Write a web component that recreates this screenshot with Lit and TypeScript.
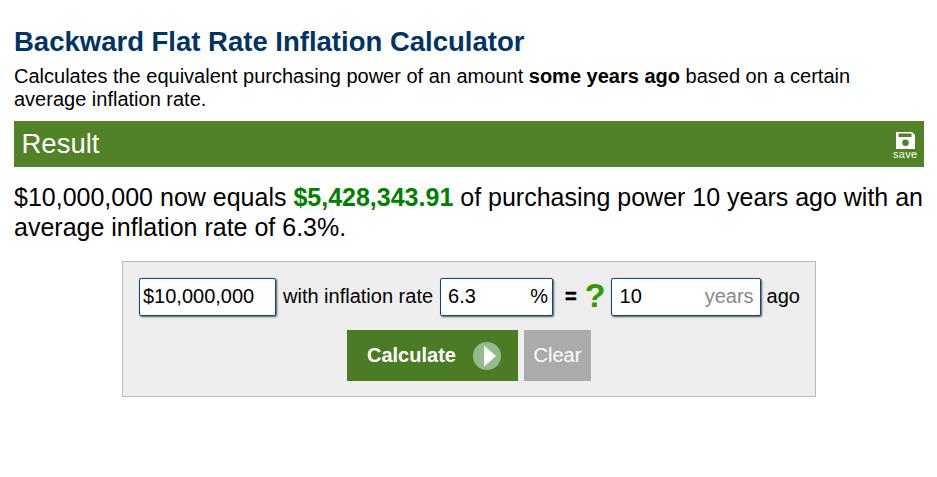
import { LitElement, css, html } from "lit";
import { customElement } from "lit/decorators.js";

@customElement("app-root")
export class AppRoot extends LitElement {
  render() {
    return html`
      <div class="page">
        <h1>Backward Flat Rate Inflation Calculator</h1>
        <p class="intro">
          Calculates the equivalent purchasing power of an amount
          <b>some years ago</b> based on a certain average inflation rate.
        </p>
        <div class="result-bar">
          <span>Result</span>
          <div class="save">
            <svg width="19" height="17" viewBox="0 0 19 17">
              <path
                fill="#fff"
                fill-rule="evenodd"
                d="M0 0H16L19 3V17H0ZM2.500 1.500V5H15.500V1.500ZM9.500 7.500A3.300 3.300 0 1 0 9.500 14.100A3.300 3.300 0 1 0 9.500 7.500Z"
              />
            </svg>
            <span>save</span>
          </div>
        </div>
        <p class="verdict">
          $10,000,000 now equals <b>$5,428,343.91</b> of purchasing power 10
          years ago with an average inflation rate of 6.3%.
        </p>
        <div class="panel">
          <div class="row">
            <div class="field amount"><span>$10,000,000</span></div>
            <span class="label">with inflation rate</span>
            <div class="field rate"><span>6.3</span><span class="unit">%</span></div>
            <b class="equals">=</b>
            <b class="question">?</b>
            <div class="field years">
              <span>10</span><span class="unit muted">years</span>
            </div>
            <span class="label">ago</span>
          </div>
          <div class="buttons">
            <div class="btn calc">
              <span>Calculate</span>
              <svg width="28" height="28" viewBox="0 0 28 28">
                <circle cx="14" cy="14" r="14" fill="#93bb8c" />
                <path d="M11 3.500L23 14L11 24.500Z" fill="#fff" />
              </svg>
            </div>
            <div class="btn clear">Clear</div>
          </div>
        </div>
      </div>
    `;
  }

  static styles = css`
    :host {
      display: block;
      font-family: "Liberation Sans", Arial, sans-serif;
      color: #000;
    }
    .page {
      box-sizing: border-box;
      width: 937px;
      height: 477px;
      padding: 27px 13px 0 14px;
      overflow: hidden;
    }
    h1 {
      margin: 0;
      font-size: 27.500px;
      line-height: 30px;
      font-weight: bold;
      color: #003366;
    }
    .intro {
      margin: 8px 0 0;
      font-size: 20px;
      line-height: 23px;
      width: 860px;
    }
    .result-bar {
      box-sizing: border-box;
      height: 46px;
      margin-top: 10px;
      padding: 0 6.500px 0 7.500px;
      background: #518228;
      color: #fff;
      display: flex;
      justify-content: space-between;
      align-items: center;
      font-size: 27.500px;
    }
    .save {
      display: flex;
      flex-direction: column;
      align-items: center;
      font-size: 11px;
      line-height: 10px;
      letter-spacing: 0.300px;
      color: #fff;
      padding-top: 3px;
    }
    .save svg {
      display: block;
    }
    .verdict {
      margin: 15px 0 0;
      font-size: 25px;
      line-height: 30px;
    }
    .verdict b {
      color: #008000;
    }
    .panel {
      box-sizing: border-box;
      width: 694px;
      height: 136px;
      margin: 19px 0 0 108px;
      border: 1px solid #bbb;
      background: #eee;
      padding: 16px 0 0 16px;
    }
    .row {
      display: flex;
      align-items: center;
      font-size: 20px;
      height: 38px;
    }
    .label {
      padding-bottom: 2px;
    }
    .field {
      box-sizing: border-box;
      height: 38px;
      border: 1px solid #044b8c;
      border-radius: 2px;
      background: #fff;
      box-shadow: 1px 1px 2px #555;
      display: flex;
      justify-content: space-between;
      align-items: center;
      font-size: 20px;
      padding-bottom: 2px;
    }
    .amount {
      width: 137px;
      padding-left: 3px;
      padding-right: 3px;
      margin-right: 7px;
    }
    .rate {
      width: 113px;
      margin-left: 7px;
      padding-left: 7px;
      padding-right: 4px;
    }
    .years {
      width: 150px;
      padding-left: 8px;
      padding-right: 6px;
      margin-right: 6px;
    }
    .muted {
      color: #888;
    }
    .equals {
      margin-left: 12px;
      font-size: 20px;
      padding-bottom: 2px;
      -webkit-text-stroke: 0.500px #000;
    }
    .question {
      margin: 0 5px 0 8px;
      font-size: 34px;
      color: #339900;
      padding-bottom: 4px;
    }
    .buttons {
      display: flex;
      gap: 6px;
      margin: 14px 0 0 208px;
    }
    .btn {
      height: 51px;
      display: flex;
      align-items: center;
      justify-content: center;
      font-size: 20px;
      color: #fff;
    }
    .calc {
      box-sizing: border-box;
      width: 171px;
      justify-content: flex-start;
      padding-left: 20px;
      gap: 17px;
      background: #4c7b25;
      font-weight: bold;
    }
    .clear {
      width: 67px;
      background: #ababab;
    }
  `;
}
